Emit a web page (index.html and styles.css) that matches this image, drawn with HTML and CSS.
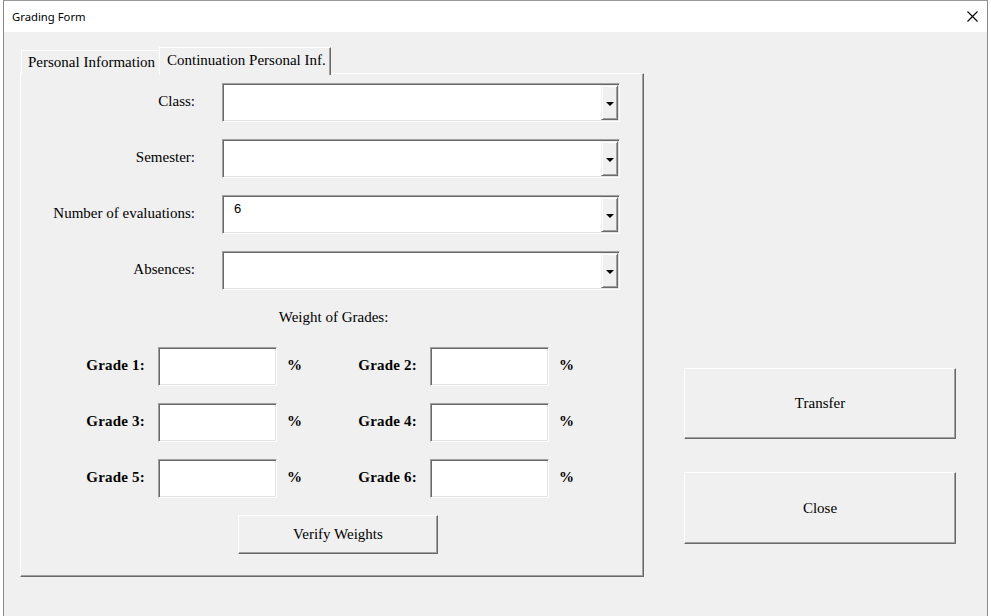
FILE: index.html
```html
<!DOCTYPE html>
<html>
<head>
<meta charset="utf-8">
<title>Grading Form</title>
<link rel="stylesheet" href="styles.css">
</head>
<body>
<div class="window">
  <div class="titlebar">
    <span class="title">Grading Form</span>
    <svg class="close-x" width="11" height="11" viewBox="0 0 11 11"><path d="M0.5 0.5 L10.5 10.5 M10.5 0.5 L0.5 10.5" stroke="#000" stroke-width="1.1" fill="none"/></svg>
  </div>
  <div class="content">
    <div class="left">
      <div class="tabs">
        <div class="tab">Personal Information</div>
        <div class="tab active">Continuation Personal Inf.</div>
      </div>
      <div class="panel">
        <div class="fields">
          <div class="label">Class:</div>
          <div class="combo"><div class="value"></div><div class="drop"><span class="arrow"></span></div></div>
          <div class="label">Semester:</div>
          <div class="combo"><div class="value"></div><div class="drop"><span class="arrow"></span></div></div>
          <div class="label">Number of evaluations:</div>
          <div class="combo"><div class="value">6</div><div class="drop"><span class="arrow"></span></div></div>
          <div class="label">Absences:</div>
          <div class="combo"><div class="value"></div><div class="drop"><span class="arrow"></span></div></div>
        </div>
        <div class="weights-title">Weight of Grades:</div>
        <div class="grades">
          <div class="glabel">Grade 1:</div><div class="input"></div><div class="pct">%</div>
          <div class="glabel">Grade 2:</div><div class="input"></div><div class="pct">%</div>
          <div class="glabel">Grade 3:</div><div class="input"></div><div class="pct">%</div>
          <div class="glabel">Grade 4:</div><div class="input"></div><div class="pct">%</div>
          <div class="glabel">Grade 5:</div><div class="input"></div><div class="pct">%</div>
          <div class="glabel">Grade 6:</div><div class="input"></div><div class="pct">%</div>
        </div>
        <div class="btn verify">Verify Weights</div>
      </div>
    </div>
    <div class="right">
      <div class="btn big">Transfer</div>
      <div class="btn big close">Close</div>
    </div>
  </div>
</div>
</body>
</html>
```

FILE: styles.css
```css
html, body {
  margin: 0;
  padding: 0;
}
body {
  background: #ffffff;
  width: 991px;
  height: 616px;
  overflow: hidden;
  font-family: "Liberation Serif", "Times New Roman", serif;
  font-size: 15px;
  color: #000;
}
.window {
  margin-left: 3px;
  width: 985px;
  height: 616px;
  box-sizing: border-box;
  border-left: 1px solid #8a8a8a;
  border-right: 1px solid #8a8a8a;
  border-top: 1px solid #9a9a9a;
  background: #f0f0f0;
}
.titlebar {
  height: 31px;
  background: #ffffff;
  display: flex;
  align-items: center;
  justify-content: space-between;
  padding: 0 9px 0 8px;
}
.title {
  font-family: "Noto Sans", "Open Sans", sans-serif;
  font-size: 11.3px;
  color: #000;
}
.close-x {
  display: block;
}
.content {
  display: flex;
  padding: 15px 0 0 16px;
}
.left {
  display: flex;
  flex-direction: column;
}
.tabs {
  display: flex;
  align-items: flex-end;
  height: 27px;
  position: relative;
  z-index: 2;
}
.tab {
  box-sizing: border-box;
  height: 24px;
  width: 138px;
  margin-left: 1px;
  padding: 2px 0 0 6px;
  border-top: 1px solid #ffffff;
  border-left: 1px solid #ffffff;
  background: #f0f0f0;
  white-space: nowrap;
  line-height: 18px;
}
.tab.active {
  height: 28px;
  width: 172px;
  margin-left: 0;
  margin-bottom: -1px;
  padding: 3px 0 0 7px;
  border-right: 1px solid #696969;
  box-shadow: inset -1px 0 #a0a0a0;
}
.panel {
  box-sizing: border-box;
  width: 624px;
  height: 504px;
  margin-top: -1px;
  border-top: 1px solid #ffffff;
  border-left: 1px solid #ffffff;
  border-right: 1px solid #696969;
  border-bottom: 1px solid #696969;
  box-shadow: inset -1px -1px #a0a0a0;
  padding-top: 9px;
  position: relative;
  z-index: 1;
}
.fields {
  display: grid;
  grid-template-columns: 174px 398px;
  column-gap: 27px;
  row-gap: 17px;
  grid-auto-rows: 39px;
}
.label {
  text-align: right;
  align-self: center;
  line-height: 18px;
  margin-top: -3px;
  white-space: nowrap;
}
.combo {
  box-sizing: border-box;
  height: 39px;
  background: #ffffff;
  border: 1px solid;
  border-color: #a0a0a0 #ffffff #ffffff #a0a0a0;
  box-shadow: inset 1px 1px #696969, inset -1px -1px #e3e3e3;
  display: flex;
  padding: 1px;
}
.value {
  flex: 1;
  font-family: "Liberation Sans", "DejaVu Sans", sans-serif;
  font-size: 13px;
  padding: 4px 0 0 10px;
  line-height: 15px;
}
.drop {
  box-sizing: border-box;
  width: 17px;
  background: #f0f0f0;
  border-top: 1px solid #f0f0f0;
  border-left: 1px solid #f0f0f0;
  border-right: 1px solid #696969;
  border-bottom: 1px solid #696969;
  box-shadow: inset 1px 1px #ffffff, inset -1px -1px #a0a0a0;
  display: flex;
  align-items: center;
  justify-content: center;
}
.arrow {
  width: 0;
  height: 0;
  border-left: 4px solid transparent;
  border-right: 4px solid transparent;
  border-top: 4px solid #000;
  margin-top: 2px;
}
.weights-title {
  margin-top: 18px;
  line-height: 18px;
  text-align: center;
  padding-left: 3px;
}
.grades {
  margin-top: 21px;
  display: grid;
  grid-template-columns: 137px 119px 81px 72px 119px auto;
  grid-auto-rows: 39px;
  row-gap: 17px;
}
.glabel {
  font-weight: bold;
  text-align: right;
  padding-right: 13px;
  align-self: center;
  line-height: 18px;
  margin-top: -4px;
  white-space: nowrap;
  letter-spacing: 0.2px;
}
.pct {
  font-weight: bold;
  padding-left: 10px;
  align-self: center;
  line-height: 18px;
  margin-top: -4px;
}
.input {
  box-sizing: border-box;
  height: 39px;
  background: #ffffff;
  border: 1px solid;
  border-color: #a0a0a0 #ffffff #ffffff #a0a0a0;
  box-shadow: inset 1px 1px #696969, inset -1px -1px #e3e3e3;
}
.btn {
  box-sizing: border-box;
  background: #f0f0f0;
  border-top: 1px solid #ffffff;
  border-left: 1px solid #ffffff;
  border-right: 1px solid #696969;
  border-bottom: 1px solid #696969;
  box-shadow: inset -1px -1px #a0a0a0;
  display: flex;
  align-items: center;
  justify-content: center;
}
.verify {
  margin-top: 17px;
  margin-left: 217px;
  width: 200px;
  height: 39px;
}
.right {
  margin-left: 40px;
  padding-top: 321px;
  display: flex;
  flex-direction: column;
  gap: 33px;
}
.big {
  width: 272px;
  height: 71px;
}
.big.close {
  height: 72px;
}
```
